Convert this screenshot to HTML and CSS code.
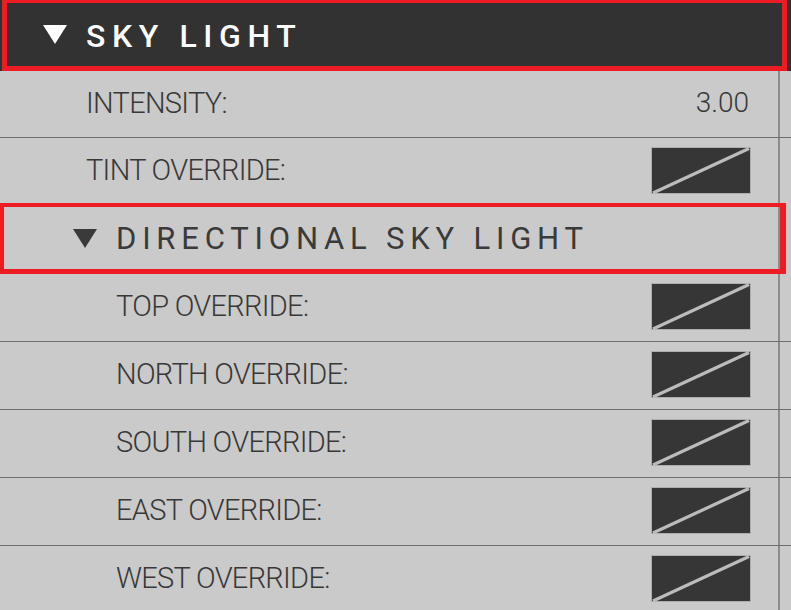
FILE: index.html
```html
<!DOCTYPE html>
<html lang="en">
<head>
    <meta charset="UTF-8">
    <meta name="viewport" content="width=device-width, initial-scale=1.0">
    <title>Sky Light</title>
    <link rel="stylesheet" href="styles.css">
</head>
<body>
    <div class="panel">
        <div class="group-head">
            <div class="head-box">
                <svg class="caret" width="24" height="19" viewBox="0 0 24 19"><polygon points="0,0 24,0 12,19" fill="#ffffff"/></svg>
                <span class="head-title">SKY LIGHT</span>
            </div>
        </div>

        <div class="props">
            <div class="row">
                <span class="label">INTENSITY:</span>
                <span class="value">3.00</span>
            </div>
            <div class="row no-line">
                <span class="label">TINT OVERRIDE:</span>
                <svg class="swatch" width="100" height="47" viewBox="0 0 100 47"><rect x="0.5" y="0.5" width="99" height="46" fill="#363636" stroke="#adadad"/><line x1="2" y1="46" x2="98" y2="1.5" stroke="#bcbcbc" stroke-width="3.2"/></svg>
            </div>

            <div class="sub-head">
                <svg class="caret" width="24" height="19" viewBox="0 0 24 19"><polygon points="0,0 24,0 12,19" fill="#3a3a3a"/></svg>
                <span class="sub-title">DIRECTIONAL SKY LIGHT</span>
            </div>

            <div class="row sub">
                <span class="label">TOP OVERRIDE:</span>
                <svg class="swatch" width="100" height="47" viewBox="0 0 100 47"><rect x="0.5" y="0.5" width="99" height="46" fill="#363636" stroke="#adadad"/><line x1="2" y1="46" x2="98" y2="1.5" stroke="#bcbcbc" stroke-width="3.2"/></svg>
            </div>
            <div class="row sub">
                <span class="label">NORTH OVERRIDE:</span>
                <svg class="swatch" width="100" height="47" viewBox="0 0 100 47"><rect x="0.5" y="0.5" width="99" height="46" fill="#363636" stroke="#adadad"/><line x1="2" y1="46" x2="98" y2="1.5" stroke="#bcbcbc" stroke-width="3.2"/></svg>
            </div>
            <div class="row sub">
                <span class="label">SOUTH OVERRIDE:</span>
                <svg class="swatch" width="100" height="47" viewBox="0 0 100 47"><rect x="0.5" y="0.5" width="99" height="46" fill="#363636" stroke="#adadad"/><line x1="2" y1="46" x2="98" y2="1.5" stroke="#bcbcbc" stroke-width="3.2"/></svg>
            </div>
            <div class="row sub">
                <span class="label">EAST OVERRIDE:</span>
                <svg class="swatch" width="100" height="47" viewBox="0 0 100 47"><rect x="0.5" y="0.5" width="99" height="46" fill="#363636" stroke="#adadad"/><line x1="2" y1="46" x2="98" y2="1.5" stroke="#bcbcbc" stroke-width="3.2"/></svg>
            </div>
            <div class="row sub">
                <span class="label">WEST OVERRIDE:</span>
                <svg class="swatch" width="100" height="47" viewBox="0 0 100 47"><rect x="0.5" y="0.5" width="99" height="46" fill="#363636" stroke="#adadad"/><line x1="2" y1="46" x2="98" y2="1.5" stroke="#bcbcbc" stroke-width="3.2"/></svg>
            </div>
        </div>
    </div>
</body>
</html>
```

FILE: styles.css
```css
body {
    margin: 0;
    background-color: #cacaca;
    font-family: Roboto, "Liberation Sans", sans-serif;
    color: #383838;
    overflow: hidden;
}
.panel {
    display: flex;
    flex-direction: column;
    width: 791px;
}

/* top section header, dark bar */
.group-head {
    background-color: #323232;
    height: 71px;
    padding: 0 4px 0 2px;
}
.head-box {
    box-sizing: border-box;
    height: 71px;
    border: 5px solid #ed1c24;
    border-top-width: 3px;
    display: flex;
    align-items: center;
    padding-left: 36px;
}
.caret {
    display: block;
    flex-shrink: 0;
}
.head-title {
    margin-left: 19px;
    color: #ffffff;
    font-size: 32px;
    font-weight: 500;
    letter-spacing: 6.6px;
    line-height: 1;
    padding-top: 2px;
}

/* property list with the scroll rail at the right */
.props {
    display: flex;
    flex-direction: column;
    background-image: linear-gradient(to right, transparent 778px, #8c8c8c 778px, #8c8c8c 780px, transparent 780px);
}
.row {
    box-sizing: border-box;
    height: 67px;
    display: flex;
    align-items: center;
    justify-content: space-between;
    padding: 0 40px 2px 86px;
    border-bottom: 1px solid #6e6e6e;
}
.row.no-line {
    height: 65px;
    border-bottom: none;
    padding-bottom: 0;
}
.row.sub {
    height: 68px;
    padding-left: 116px;
}
.label {
    font-size: 29px;
    font-weight: 300;
    letter-spacing: -0.7px;
    line-height: 1;
}
.value {
    font-size: 28px;
    font-weight: 300;
    line-height: 1;
    margin-right: 2px;
}
.swatch {
    display: block;
}

/* nested section header */
.sub-head {
    box-sizing: border-box;
    height: 71px;
    margin-right: 5px;
    border: 4px solid #ed1c24;
    border-right-width: 6px;
    border-bottom-width: 5px;
    display: flex;
    align-items: center;
    padding-left: 69px;
}
.sub-title {
    margin-left: 19px;
    font-size: 31px;
    font-weight: 400;
    letter-spacing: 5.8px;
    line-height: 1;
    color: #3a3a3a;
}
```
